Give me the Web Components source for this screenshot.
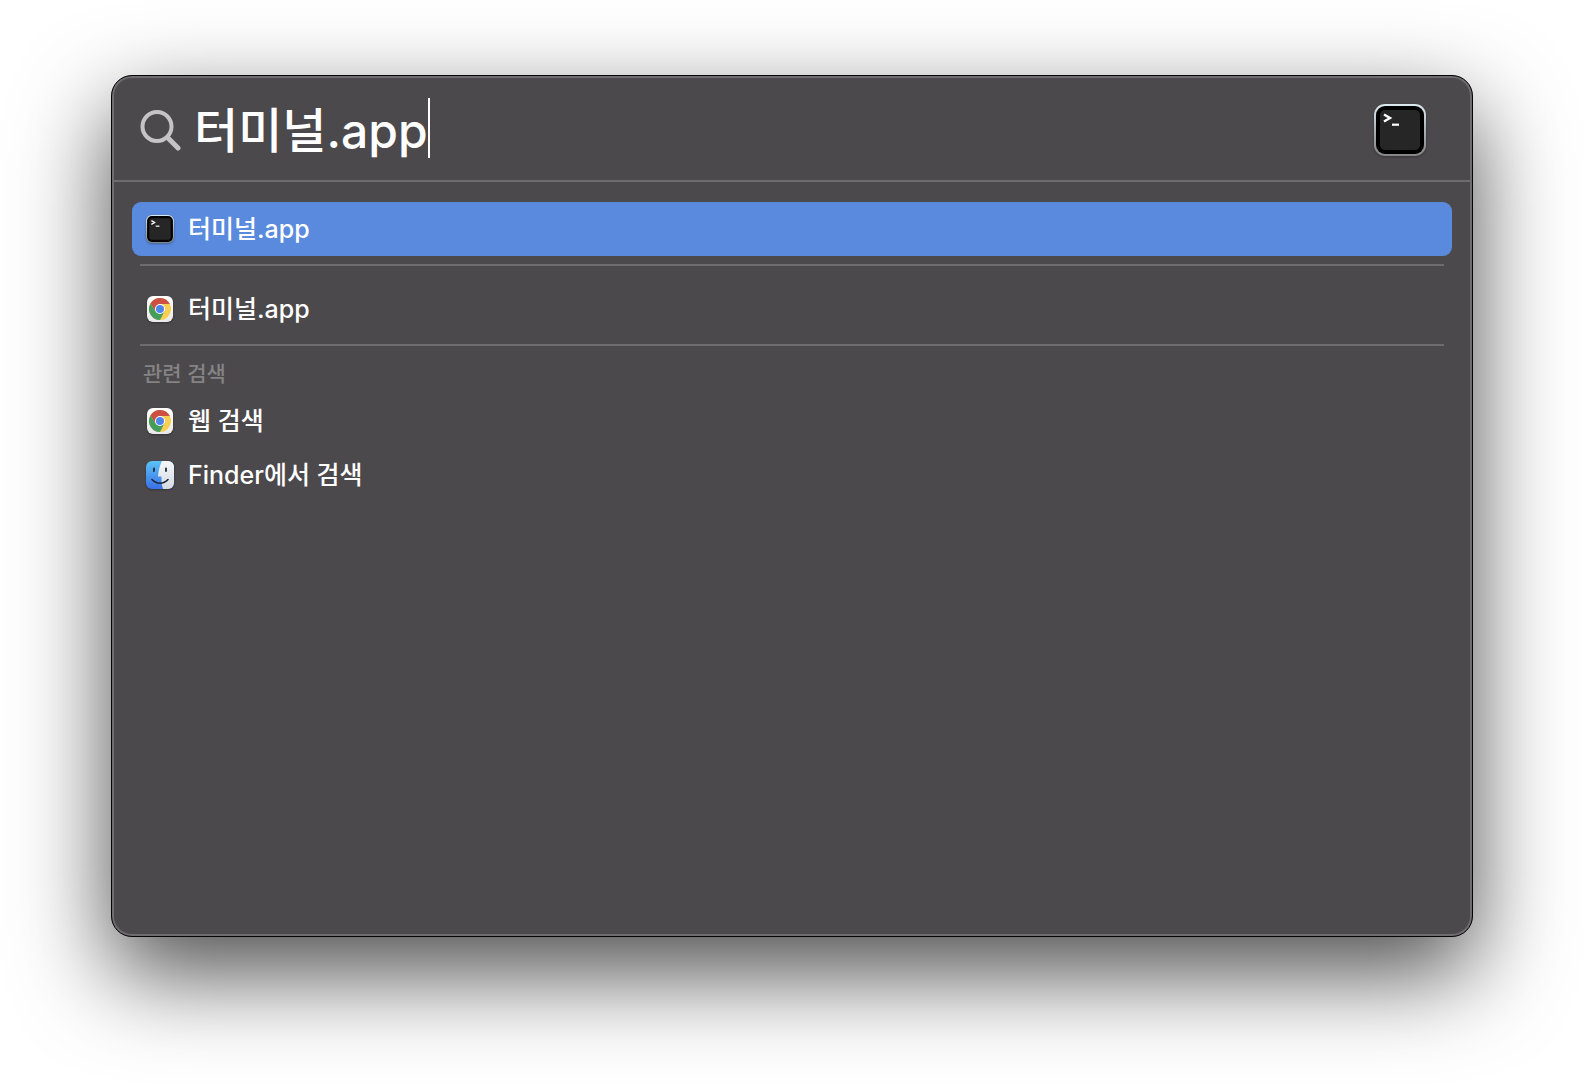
<!DOCTYPE html>
<html lang="ko">
<head>
<meta charset="utf-8">
<title>Spotlight</title>
<style>
  html, body { margin: 0; background: #fff; }
  body { font-family: Inter, "Noto Sans CJK KR", sans-serif; color: #fff; }
</style>
</head>
<body>
<spotlight-window>
  <search-field slot="search" value="터미널.app"></search-field>
  <result-row icon="terminal" selected>터미널.app</result-row>
  <list-divider></list-divider>
  <result-row icon="chrome">터미널.app</result-row>
  <list-divider></list-divider>
  <section-label>관련 검색</section-label>
  <result-row icon="chrome">웹 검색</result-row>
  <result-row icon="finder">Finder에서 검색</result-row>
</spotlight-window>

<script>
const define = (name, html, setup) => customElements.define(name, class extends HTMLElement {
  connectedCallback() {
    if (this.shadowRoot) return;
    this.attachShadow({ mode: 'open' }).innerHTML = html;
    if (setup) setup(this, this.shadowRoot);
  }
});

const icons = {
  terminal: `<svg viewBox="0 0 52 52" aria-hidden="true">
    <defs><linearGradient id="rim" x1="0" y1="0" x2="0" y2="1"><stop offset="0" stop-color="#dceaf0"/><stop offset=".5" stop-color="#a9b0b4"/><stop offset="1" stop-color="#858585"/></linearGradient></defs>
    <rect width="52" height="52" rx="11" fill="url(#rim)"/>
    <rect x="2" y="2" width="48" height="48" rx="9" fill="#000"/>
    <rect x="6" y="6" width="40" height="40" rx="5" fill="#262626"/>
    <path d="M10 10.500l6 3.500-6 3.500" fill="none" stroke="#fff" stroke-width="2.400"/>
    <path d="M18 20.700h7" stroke="#fff" stroke-width="2.200"/></svg>`,
  chrome: `<svg viewBox="0 0 28 28" aria-hidden="true">
    <defs><linearGradient id="tile" x1="0" y1="0" x2="0" y2="1"><stop offset="0" stop-color="#fff"/><stop offset="1" stop-color="#e9e9e9"/></linearGradient></defs>
    <rect x="1" y="1" width="26" height="26" rx="6" fill="url(#tile)"/>
    <circle cx="14" cy="14" r="11" fill="#f7cf52"/>
    <path d="M14 9H23.800A11 11 0 0 0 4.470 8.500L9.670 16.500z" fill="#cc5144"/>
    <path d="M4.470 8.500A11 11 0 0 0 14 25l4.330-8.500H14L9.670 16.500z" fill="#459c5c"/>
    <circle cx="14" cy="14" r="5" fill="#fff"/>
    <circle cx="14" cy="14" r="4" fill="#5285ec"/></svg>`,
  finder: `<svg viewBox="0 0 28 28" aria-hidden="true">
    <defs><linearGradient id="sky" x1="0" y1="0" x2="0" y2="1"><stop offset="0" stop-color="#5bc3f7"/><stop offset="1" stop-color="#3a6fe8"/></linearGradient>
    <linearGradient id="pale" x1="0" y1="0" x2="0" y2="1"><stop offset="0" stop-color="#f5f6f8"/><stop offset="1" stop-color="#d5dbe3"/></linearGradient>
    <clipPath id="shape"><rect width="28" height="28" rx="6"/></clipPath></defs>
    <g clip-path="url(#shape)"><rect width="28" height="28" fill="url(#sky)"/>
    <path d="M16 0C14 4 12.500 9 12 15.500h3.500C15.300 20 15.700 24 17 28h11V0z" fill="url(#pale)"/></g>
    <path d="M8 7.500v2.500M20 7.500v2.500" stroke="#1c2733" stroke-width="1.800" stroke-linecap="round"/>
    <path d="M6 18.500c4.500 5 11.500 5 16 0" fill="none" stroke="#1c2733" stroke-width="1.600" stroke-linecap="round"/></svg>`
};

define('app-icon', `<style>
  :host { display: block; flex: none; width: 28px; height: 28px; filter: drop-shadow(0 1px 1px rgba(0,0,0,.3)); }
  svg { display: block; width: 100%; height: 100%; }
</style>`, (el, root) => root.innerHTML += icons[el.getAttribute('name')]);

define('spotlight-window', `<style>
  :host { display: flex; box-sizing: border-box; min-height: 100vh; padding: 75px 111px 147px; }
  main {
    flex: 1; min-width: 0; border: 1px solid #050505; border-radius: 21px; background: #4c494c;
    box-shadow: inset 0 0 0 2px #6e6c6f, 0 36px 94px rgba(0,0,0,.7);
  }
  .list { padding: 20px; }
</style><main><slot name="search"></slot><div class="list"><slot></slot></div></main>`);

define('search-field', `<style>
  :host { display: flex; align-items: center; box-sizing: border-box; height: 106px; padding: 4px 46px 0 28px; border-bottom: 2px solid #6e6c6f; }
  .glass { flex: none; width: 42px; height: 42px; margin-right: 12px; }
  label { display: flex; align-items: center; flex: 1; min-width: 0; padding-bottom: 4px; }
  input { box-sizing: border-box; field-sizing: content; height: 60px; padding: 0 0 2px; border: 0; outline: 0; background: none; color: #fff; font: inherit; font-size: 48px; font-weight: 500; caret-color: transparent; }
  .caret { width: 2px; height: 60px; background: #fff; }
  app-icon { width: 52px; height: 52px; }
</style>
<svg class="glass" viewBox="0 0 42 42" fill="none" stroke="#c5c3c6" aria-hidden="true"><circle cx="17" cy="17.500" r="14.500" stroke-width="4"/><path d="M27.500 28.500 38 39" stroke-width="5" stroke-linecap="round"/></svg>
<label><input type="text" aria-label="Spotlight 검색"><span class="caret"></span></label>
<app-icon name="terminal"></app-icon>`, (el, root) => root.querySelector('input').value = el.getAttribute('value'));

define('result-row', `<style>
  :host { display: block; }
  button { display: flex; align-items: center; gap: 14px; width: 100%; height: 54px; padding: 0 14px; border: 0; border-radius: 9px; background: none; color: #fff; font: inherit; font-size: 25px; font-weight: 500; line-height: 36px; text-align: left; }
  :host([selected]) button { background: #598ade; }
</style><button type="button"><app-icon></app-icon><span><slot></slot></span></button>`,
  (el, root) => root.querySelector('app-icon').replaceWith(Object.assign(document.createElement('template'), { innerHTML: `<app-icon name="${el.getAttribute('icon')}"></app-icon>` }).content));

define('list-divider', `<style>:host { display: block; height: 2px; margin: 8px 8px 16px; background: #6e6c6f; }</style>`);

define('section-label', `<style>:host { display: block; padding: 0 11px 8px; line-height: 24px; font-size: 21px; font-weight: 500; color: #858386; }</style><slot></slot>`);
</script>
</body>
</html>
